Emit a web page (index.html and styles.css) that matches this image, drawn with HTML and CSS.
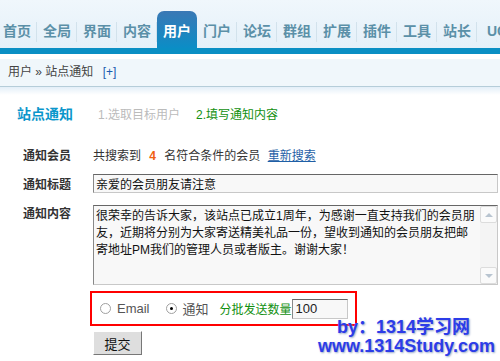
FILE: index.html
```html
<!DOCTYPE html>
<html lang="zh-CN">
<head>
    <meta charset="UTF-8">
    <title>站点通知</title>
    <link rel="stylesheet" href="styles.css">
</head>
<body>
    <div class="topnav">
        <ul class="tabs">
            <li>首页</li>
            <li>全局</li>
            <li>界面</li>
            <li>内容</li>
            <li class="active">用户</li>
            <li>门户</li>
            <li>论坛</li>
            <li>群组</li>
            <li>扩展</li>
            <li>插件</li>
            <li>工具</li>
            <li>站长</li>
            <li>UC</li>
        </ul>
    </div>
    <div class="crumb">用户 &raquo; 站点通知 <a href="#" class="plus">[+]</a></div>

    <div class="main">
        <div class="title">
            <h3>站点通知</h3>
            <span class="step">1.选取目标用户</span>
            <span class="step current">2.填写通知内容</span>
        </div>

        <div class="row">
            <label>通知会员</label>
            <div class="val">共搜索到 <em>4</em> 名符合条件的会员 <a href="#" class="link">重新搜索</a></div>
        </div>
        <div class="row">
            <label>通知标题</label>
            <input type="text" class="txt" value="亲爱的会员朋友请注意">
        </div>
        <div class="row top">
            <label>通知内容</label>
            <div class="area">
                <div class="area-text">很荣幸的告诉大家，该站点已成立1周年，为感谢一直支持我们的会员朋友，近期将分别为大家寄送精美礼品一份，望收到通知的会员朋友把邮寄地址PM我们的管理人员或者版主。谢谢大家！</div>
                <div class="scroll">
                    <span class="arrow up"></span>
                    <span class="arrow down"></span>
                </div>
            </div>
        </div>

        <div class="opts">
            <span class="radio"></span><span class="opt">Email</span>
            <span class="radio on"></span><span class="opt">通知</span>
            <span class="green">分批发送数量</span><input type="text" class="num" value="100">
        </div>
        <button class="btn">提交</button>
    </div>

    <div class="mark">
        <div>by：1314学习网</div>
        <div>www.1314Study.com</div>
    </div>
</body>
</html>
```

FILE: styles.css
```css
* {
    box-sizing: border-box;
}
body {
    margin: 0;
    font-family: "Liberation Sans", "Noto Sans CJK SC", sans-serif;
    font-size: 12px;
    color: #333;
    background: #fff;
    position: relative;
    width: 500px;
    height: 361px;
    overflow: hidden;
}
.topnav {
    height: 54px;
    background: linear-gradient(#f0f7fc, #e4f0f9);
    border-bottom: 6px solid #0a8fc4;
    padding-top: 11px;
}
.tabs {
    list-style: none;
    margin: 0 0 0 -3px;
    padding: 0;
    display: flex;
    white-space: nowrap;
}
.tabs li {
    width: 40px;
    flex: none;
    height: 37px;
    line-height: 40px;
    text-align: center;
    font-size: 14px;
    font-weight: bold;
    color: #5b90a8;
    position: relative;
}
.tabs li::after {
    content: "";
    position: absolute;
    right: 0;
    top: 11px;
    height: 20px;
    border-right: 1px solid #d2e2ec;
}
.tabs li.active {
    color: #fff;
    background: linear-gradient(#3a78b5, #0b8dc6);
    border-radius: 7px 7px 0 0;
}
.tabs li.active::after {
    display: none;
}
.crumb {
    margin-top: 5px;
    height: 28px;
    line-height: 27px;
    padding-left: 8px;
    background: #f0f7fb;
    border-bottom: 1px solid #b5cdd9;
    position: relative;
    color: #444;
}
.crumb::after {
    content: "";
    position: absolute;
    left: 0;
    right: 0;
    top: 28px;
    height: 8px;
    background: linear-gradient(#e3eff8, #fff);
}
.crumb .plus {
    color: #1a5cb0;
    text-decoration: none;
    margin-left: 6px;
}
.main {
    padding: 16px 0 0 17px;
}
.title {
    display: flex;
    align-items: baseline;
    height: 37px;
}
.title h3 {
    margin: 0 25px 0 0;
    font-size: 14px;
    color: #0b96cb;
}
.step {
    color: #bbb;
    margin-right: 16px;
}
.step.current {
    color: #129010;
}
.row {
    display: flex;
    align-items: center;
    min-height: 28px;
    margin-bottom: 1px;
}
.row.top {
    align-items: flex-start;
    margin-top: 8px;
}
.row label {
    width: 76px;
    padding-left: 6px;
    font-weight: bold;
    color: #333;
    flex: none;
}
.row.top label {
    margin-top: -1px;
}
.val em {
    font-style: normal;
    font-weight: bold;
    color: #f06010;
    margin: 0 5px;
}
.link {
    color: #1f5fa6;
    margin-left: 4px;
}
.txt {
    width: 405px;
    height: 19px;
    border: 1px solid #c8c8c8;
    border-top-color: #666;
    border-left-color: #888;
    background: #f8f8f8;
    font: inherit;
    color: #111;
    padding: 0 2px;
}
.area {
    width: 405px;
    height: 80px;
    border: 1px solid #c8c8c8;
    border-top-color: #666;
    border-left-color: #888;
    background: #f8f8f8;
    display: flex;
}
.area-text {
    flex: 1;
    padding: 2px;
    line-height: 17px;
    color: #111;
}
.scroll {
    width: 17px;
    display: flex;
    flex-direction: column;
    justify-content: space-between;
    background: #f4f4f4;
}
.arrow {
    height: 17px;
    border: 1px solid #dcdcdc;
    border-radius: 2px;
    background: #fafafa;
    position: relative;
}
.arrow::after {
    content: "";
    position: absolute;
    left: 4px;
    border: 4px solid transparent;
}
.arrow.up::after {
    border-bottom-color: #b8c4d0;
    top: 2px;
}
.arrow.down::after {
    border-top-color: #b8c4d0;
    top: 6px;
}
.opts {
    margin: 6px 0 0 73px;
    width: 267px;
    height: 35px;
    border: 2px solid #f00;
    display: flex;
    align-items: center;
    padding-left: 8px;
    color: #555;
}
.radio {
    width: 11px;
    height: 11px;
    border-radius: 50%;
    border: 1px solid #a0a0a0;
    background: #fff;
    margin-right: 6px;
    position: relative;
}
.radio.on::after {
    content: "";
    position: absolute;
    left: 3px;
    top: 3px;
    width: 3px;
    height: 3px;
    border-radius: 50%;
    background: #000;
}
.opt {
    font-size: 13px;
    margin-right: 16px;
}
.opts .opt:nth-of-type(4) {
    margin-right: 11px;
}
.green {
    color: #129010;
}
.num {
    width: 56px;
    height: 20px;
    border: 1px solid #c8c8c8;
    border-top-color: #666;
    border-left-color: #888;
    background: #f8f8f8;
    font: inherit;
    font-size: 13px;
    color: #222;
    padding: 0 3px;
}
.btn {
    margin: 5px 0 0 76px;
    width: 49px;
    height: 24px;
    font: inherit;
    font-size: 13px;
    color: #111;
    background: #dedede;
    border: 1px solid #fff;
    border-right-color: #777;
    border-bottom-color: #777;
}
.mark {
    position: absolute;
    right: 5px;
    top: 318px;
    text-align: right;
    font-family: "Liberation Sans", "Noto Sans CJK SC", sans-serif;
    font-weight: bold;
    font-size: 18px;
    color: #2c3ce8;
    text-shadow: 1px 1px 2px #9aa8c8;
    line-height: 19px;
}
.mark div:first-child {
    margin-right: 25px;
}
```
